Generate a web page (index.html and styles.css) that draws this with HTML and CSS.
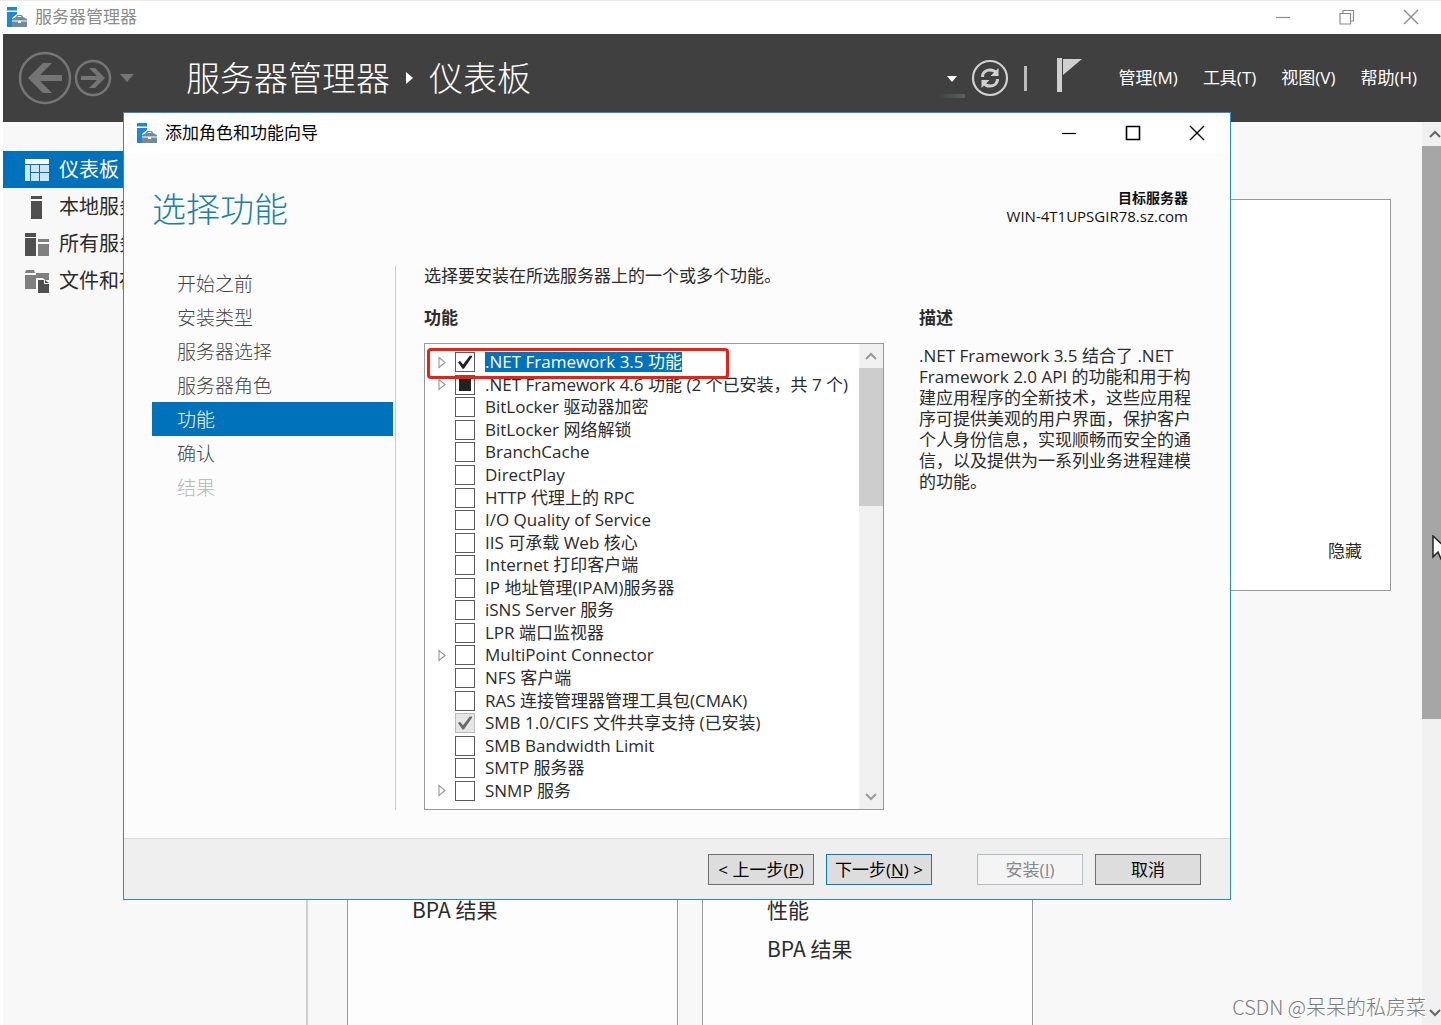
FILE: index.html
```html
<!DOCTYPE html>
<html lang="zh-CN">
<head>
<meta charset="utf-8">
<title>服务器管理器</title>
<link rel="stylesheet" href="styles.css">
</head>
<body>
<svg class="defs" aria-hidden="true">
  <symbol id="server" viewBox="0 0 20 20">
    <path fill="#1c88d8" d="M0 0h10v3.500H0zM0 5h10v2l-5 4v9H0z"/>
    <path fill="#6e8ba3" d="M5 12l4-2c.3-1.500 1-2 2-2h3c1 0 1.700.5 2 2l4 2v1.500H5zM10.500 10h4l-.5-1h-3zM5 14.500h6V16h3v-1.500h6V20H5z"/>
  </symbol>
  <symbol id="up" viewBox="0 0 12 8"><path d="M1 7l5-5 5 5" fill="none" stroke="currentColor" stroke-width="2"/></symbol>
  <symbol id="down" viewBox="0 0 12 8"><path d="M1 1l5 5 5-5" fill="none" stroke="currentColor" stroke-width="2"/></symbol>
  <symbol id="close" viewBox="0 0 16 16"><path d="M1 1l14 14M15 1L1 15" fill="none" stroke="currentColor" stroke-width="1.400"/></symbol>
  <symbol id="minimize" viewBox="0 0 16 16"><path d="M1 8.500h14" fill="none" stroke="currentColor" stroke-width="1.200"/></symbol>
  <symbol id="expand" viewBox="0 0 8 13"><path d="M1 1.500v10l6-5z" fill="#fff" stroke="#999" stroke-width="1.100"/></symbol>
</svg>
<div class="app">
  <header class="titlebar">
    <svg class="app-icon"><use href="#server"/></svg>
    <span class="titlebar-text">服务器管理器</span>
    <div class="window-buttons">
      <button type="button" aria-label="最小化"><svg><use href="#minimize"/></svg></button>
      <button type="button" aria-label="还原"><svg viewBox="0 0 16 16"><path d="M1 4.500h10.500V15H1zM4 4.500V1.500h10.500V12h-3" fill="none" stroke="currentColor" stroke-width="1.200"/></svg></button>
      <button type="button" aria-label="关闭"><svg><use href="#close"/></svg></button>
    </div>
  </header>

  <div class="banner">
    <div class="history">
      <button type="button" aria-label="后退"><svg width="54" height="54" viewBox="0 0 54 54"><circle cx="27" cy="27" r="25" fill="none" stroke="#757575" stroke-width="2.500"/><path d="M10 27L25 12h9L22 24h22v6H22l12 12h-9z" fill="#757575"/></svg></button>
      <button type="button" aria-label="前进"><svg width="38" height="38" viewBox="0 0 38 38"><circle cx="19" cy="19" r="17" fill="none" stroke="#757575" stroke-width="2.500"/><path d="M31 19L21 9h-6l8 8H7v4h16l-8 8h6z" fill="#757575"/></svg></button>
      <button type="button" class="history-more" aria-label="历史"><svg width="14" height="8" viewBox="0 0 14 8"><path d="M0 0h14L7 8z" fill="#757575"/></svg></button>
    </div>
    <h1 class="crumbs">服务器管理器<svg width="7" height="12" viewBox="0 0 7 12"><path d="M0 0v12l7-6z" fill="#fff"/></svg>仪表板</h1>
    <div class="tools">
      <button type="button" class="tool-drop" aria-label="通知范围"><svg width="10" height="6" viewBox="0 0 10 6"><path d="M0 0h10L5 6z" fill="#fff"/></svg></button>
      <button type="button" aria-label="刷新"><svg width="38" height="38" viewBox="0 0 38 38" fill="none" stroke="#d0d0d0"><circle cx="19" cy="19" r="17" stroke-width="2.200"/><path d="M11.500 18c0-5 4-7 7.500-7 3 0 5 1 6.500 3M26.500 20c0 5-4 7-7.500 7-3 0-5-1-6.500-3" stroke-width="3"/><path d="M27.500 9v8h-8l3-3zM10.500 29v-8h8l-3 3z" fill="#d0d0d0" stroke="none"/></svg></button>
      <span class="tool-line"></span>
      <button type="button" class="flag" aria-label="通知"><svg width="26" height="34" viewBox="0 0 26 34"><path d="M0 0h5v34H0zM6 1h19L6 17z" fill="#cfcfcf"/></svg></button>
    </div>
    <nav class="menu">
      <a href="#manage">管理(M)</a>
      <a href="#tools">工具(T)</a>
      <a href="#view">视图(V)</a>
      <a href="#help">帮助(H)</a>
    </nav>
  </div>

  <div class="workspace">
    <nav class="sidebar">
      <a class="active" href="#dashboard"><svg width="24" height="22" viewBox="0 0 24 22"><path fill="#fff" d="M0 0h24v5H0z"/><path fill="#cfe4f5" d="M0 6h5v16H0zM6 6h8v7H6zM15 6h9v7h-9zM6 14h8v8H6zM15 14h9v8h-9z"/></svg>仪表板</a>
      <a href="#local"><svg width="24" height="24" viewBox="0 0 24 24"><path fill="#505050" d="M6 1h11v3H6zM6 6h11v18H6z"/></svg>本地服务器</a>
      <a href="#all"><svg width="24" height="24" viewBox="0 0 24 24"><path fill="#505050" d="M0 1h11v4H0zM0 6h11v18H0z"/><path fill="#808080" d="M13 7h11v3H13zM13 12h11v12H13z"/></svg>所有服务器</a>
      <a href="#files"><svg width="24" height="24" viewBox="0 0 24 24"><path fill="#808080" d="M1 1h8l1 3H0zM0 6h11v14H0zM11 4h13v7h-4l-2-2h-7z"/><path fill="#505050" d="M13 11h6v4h5v9H13zM20 11l4 3h-4z"/></svg>文件和存储</a>
    </nav>
    <main class="dashboard">
      <section class="welcome"><button type="button">隐藏</button></section>
      <div class="tiles">
        <section class="tile"><a href="#bpa-1">BPA 结果</a></section>
        <section class="tile"><a href="#perf">性能</a><a href="#bpa-2">BPA 结果</a></section>
      </div>
    </main>
    <div class="page-scroll">
      <svg class="arrow"><use href="#up"/></svg>
      <div class="page-track"><div class="page-thumb"></div></div>
      <svg class="arrow"><use href="#down"/></svg>
    </div>
  </div>

  <div class="dialog" role="dialog" aria-labelledby="dialog-title">
    <header class="dialog-bar">
      <svg class="app-icon"><use href="#server"/></svg>
      <span id="dialog-title">添加角色和功能向导</span>
      <div class="window-buttons">
        <button type="button" aria-label="最小化"><svg><use href="#minimize"/></svg></button>
        <button type="button" aria-label="最大化"><svg viewBox="0 0 16 16"><path d="M1.500 1.500h13v13h-13z" fill="none" stroke="currentColor" stroke-width="1.600"/></svg></button>
        <button type="button" aria-label="关闭"><svg><use href="#close"/></svg></button>
      </div>
    </header>
    <div class="dialog-head">
      <h2>选择功能</h2>
      <div class="target">
        <strong>目标服务器</strong>
        <p>WIN-4T1UPSGIR78.sz.com</p>
      </div>
    </div>
    <div class="dialog-body">
      <nav class="steps">
        <a href="#s1">开始之前</a>
        <a href="#s2">安装类型</a>
        <a href="#s3">服务器选择</a>
        <a href="#s4">服务器角色</a>
        <a href="#s5" class="current">功能</a>
        <a href="#s6">确认</a>
        <a class="disabled">结果</a>
      </nav>
      <div class="choose">
        <p class="lead">选择要安装在所选服务器上的一个或多个功能。</p>
        <div class="columns">
          <section class="features">
            <h3>功能</h3>
            <div class="listbox">
              <ul>
                <li class="parent selected"><svg class="expander"><use href="#expand"/></svg><label><input type="checkbox" checked><span>.NET Framework 3.5 功能</span></label></li>
                <li class="parent"><svg class="expander"><use href="#expand"/></svg><label><input type="checkbox" class="partial"><span>.NET Framework 4.6 功能 (2 个已安装，共 7 个)</span></label></li>
                <li><label><input type="checkbox"><span>BitLocker 驱动器加密</span></label></li>
                <li><label><input type="checkbox"><span>BitLocker 网络解锁</span></label></li>
                <li><label><input type="checkbox"><span>BranchCache</span></label></li>
                <li><label><input type="checkbox"><span>DirectPlay</span></label></li>
                <li><label><input type="checkbox"><span>HTTP 代理上的 RPC</span></label></li>
                <li><label><input type="checkbox"><span>I/O Quality of Service</span></label></li>
                <li><label><input type="checkbox"><span>IIS 可承载 Web 核心</span></label></li>
                <li><label><input type="checkbox"><span>Internet 打印客户端</span></label></li>
                <li><label><input type="checkbox"><span>IP 地址管理(IPAM)服务器</span></label></li>
                <li><label><input type="checkbox"><span>iSNS Server 服务</span></label></li>
                <li><label><input type="checkbox"><span>LPR 端口监视器</span></label></li>
                <li class="parent"><svg class="expander"><use href="#expand"/></svg><label><input type="checkbox"><span>MultiPoint Connector</span></label></li>
                <li><label><input type="checkbox"><span>NFS 客户端</span></label></li>
                <li><label><input type="checkbox"><span>RAS 连接管理器管理工具包(CMAK)</span></label></li>
                <li><label><input type="checkbox" checked disabled><span>SMB 1.0/CIFS 文件共享支持 (已安装)</span></label></li>
                <li><label><input type="checkbox"><span>SMB Bandwidth Limit</span></label></li>
                <li><label><input type="checkbox"><span>SMTP 服务器</span></label></li>
                <li class="parent"><svg class="expander"><use href="#expand"/></svg><label><input type="checkbox"><span>SNMP 服务</span></label></li>
              </ul>
              <div class="list-scroll">
                <svg class="arrow"><use href="#up"/></svg>
                <div class="list-track"><div class="list-thumb"></div></div>
                <svg class="arrow"><use href="#down"/></svg>
              </div>
              <div class="highlight"></div>
            </div>
          </section>
          <section class="description">
            <h3>描述</h3>
            <p>.NET Framework 3.5 结合了 .NET Framework 2.0 API 的功能和用于构建应用程序的全新技术，这些应用程序可提供美观的用户界面，保护客户个人身份信息，实现顺畅而安全的通信，以及提供为一系列业务进程建模的功能。</p>
          </section>
        </div>
      </div>
    </div>
    <footer class="dialog-foot">
      <button type="button">&lt; 上一步(<u>P</u>)</button>
      <button type="button" class="primary">下一步(<u>N</u>) &gt;</button>
      <button type="button" class="install" disabled>安装(<u>I</u>)</button>
      <button type="button">取消</button>
    </footer>
  </div>

  <svg class="cursor" width="18" height="26" viewBox="0 0 18 26"><path d="M1 1v21l5-5 3 7 4-2-3-6h7z" fill="#fff" stroke="#222" stroke-width="1.500"/></svg>
  <div class="watermark">CSDN @呆呆的私房菜</div>
</div>
</body>
</html>
```
FILE: styles.css
```css
* { box-sizing: border-box; }

body {
  margin: 0;
  background: #fff;
  color: #2b2b2b;
  font: 17px/22px "Open Sans", "Noto Sans CJK SC", sans-serif;
}

h1, h2, h3, p, ul { margin: 0; padding: 0; font-weight: 400; }
ul { list-style: none; }
a { color: inherit; text-decoration: none; }
svg { flex: none; display: block; }

button {
  margin: 0;
  padding: 0;
  border: 0;
  background: none;
  color: inherit;
  font: inherit;
}

.defs { position: absolute; width: 0; height: 0; }

.app {
  position: relative;
  display: flex;
  flex-direction: column;
  height: 100vh;
  min-height: 920px;
  overflow: hidden;
  border-top: 1px solid #ececec;
}

.app-icon { width: 20px; height: 20px; }

/* Main window title bar */
.titlebar {
  display: flex;
  align-items: center;
  gap: 8px;
  height: 33px;
  padding: 0 22px 2px 7px;
  color: #8c8c8c;
}

.window-buttons {
  display: flex;
  gap: 48px;
  margin-left: auto;
}

.window-buttons svg { width: 16px; height: 16px; }

/* Dark banner */
.banner {
  display: flex;
  align-items: center;
  height: 88px;
  margin-left: 3px;
  padding: 0 24px 0 15px;
  background: #404040;
  color: #fff;
}

.history { display: flex; align-items: center; gap: 2px; width: 168px; }
.history-more { margin-left: 6px; }

.crumbs {
  display: flex;
  align-items: center;
  gap: 16px;
  font-size: 34px;
  font-weight: 300;
  line-height: 48px;
}

.tools { display: flex; align-items: center; margin-left: auto; }

.tool-drop {
  padding: 18px 8px 16px;
  margin-right: 6px;
  background: linear-gradient(90deg, #404040, #5a6164) bottom / 100% 4px no-repeat;
}

.tool-line { width: 3px; height: 25px; margin: 0 30px 0 15px; background: #bdbdbd; }
.flag { margin-bottom: 6px; }

.menu { display: flex; gap: 25px; margin-left: 36px; }

/* Workspace under the banner */
.workspace {
  flex: 1;
  display: flex;
  min-height: 0;
  margin-left: 3px;
  background: #f8f8f8;
}

.sidebar {
  flex: none;
  width: 305px;
  padding-top: 29px;
  border-right: 2px solid #cfcfcf;
}

.sidebar a {
  display: flex;
  align-items: center;
  gap: 10px;
  height: 37px;
  padding-left: 22px;
  font-size: 20px;
}

.sidebar .active { background: #0072bc; color: #fff; }

.dashboard {
  flex: 1;
  display: flex;
  flex-direction: column;
  gap: 48px;
  min-width: 0;
  padding: 77px 31px 0 39px;
}

.welcome {
  flex: none;
  display: flex;
  justify-content: flex-end;
  align-items: flex-end;
  height: 392px;
  padding: 28px;
  border: 1px solid #999;
  background: #fff;
}

.tiles { flex: 1; display: flex; gap: 24px; }

.tile {
  display: flex;
  flex-direction: column;
  gap: 17px;
  width: 331px;
  padding: 258px 64px 0;
  border: 1px solid #999;
  border-bottom: 0;
  background: #fdfdfd;
  font: 21px/22px "Noto Sans CJK SC", sans-serif;
}

.page-scroll {
  display: flex;
  flex-direction: column;
  align-items: center;
  width: 19px;
  overflow: hidden;
  background: #f0f0f0;
  color: #666;
}

.arrow { width: 12px; height: 8px; margin: 8px 0; }
.page-scroll .arrow { margin-left: 6px; }
.page-track { flex: 1; align-self: stretch; }
.page-thumb { height: 67%; background: #a6a6a6; }

/* Wizard window */
.dialog {
  position: absolute;
  top: 111px;
  left: 123px;
  right: 210px;
  border: 1px solid #2a8ad8;
  background: #fcfcfc;
}

.dialog-bar {
  display: flex;
  align-items: center;
  gap: 8px;
  height: 41px;
  padding: 0 25px 2px 13px;
  background: #fff;
  color: #000;
}

.dialog-head {
  display: flex;
  justify-content: space-between;
  padding: 31px 42px 0 28px;
}

.dialog-head h2 {
  color: #1b80a4;
  font-size: 34px;
  font-weight: 300;
  line-height: 48px;
}

.target {
  padding-top: 4px;
  color: #111;
  font-size: 15px;
  line-height: 18px;
  text-align: right;
}

.target strong { display: block; font-size: 14px; }

.dialog-body { display: flex; padding: 33px 32px 28px 28px; }

.steps {
  display: flex;
  flex-direction: column;
  flex: none;
  width: 244px;
  padding-right: 2px;
  border-right: 1px solid #ccc;
  color: #444;
}

.steps a {
  height: 34px;
  padding-left: 25px;
  font-size: 19px;
  font-weight: 300;
  line-height: 36px;
}

.steps .current { background: #0072bc; color: #fff; }
.steps .disabled { color: #b4b4b4; }

.choose { flex: 1; padding-left: 28px; }
.lead { line-height: 20px; }
.columns { display: flex; gap: 35px; margin-top: 22px; }
.columns h3 { font-size: 17px; font-weight: 700; line-height: 20px; }

.features { flex: none; width: 460px; }

.listbox {
  position: relative;
  display: flex;
  height: 467px;
  margin-top: 15px;
  border: 1px solid #999;
  background: #fff;
}

.listbox ul {
  flex: 1;
  display: grid;
  grid-auto-rows: 1fr;
  padding: 7px 0;
}

.listbox li { display: flex; align-items: center; min-height: 0; padding-left: 30px; }
.listbox .parent { padding-left: 13px; }
.listbox label { display: flex; align-items: center; gap: 10px; white-space: nowrap; }
.expander { width: 8px; height: 13px; margin-right: 9px; }

input[type="checkbox"] {
  appearance: none;
  display: grid;
  place-items: center;
  width: 20px;
  height: 20px;
  margin: 0;
  border: 1px solid #5c5c5c;
  background: #fff;
}

input:checked::after {
  content: "";
  width: 14px;
  height: 14px;
  background: #222;
  clip-path: polygon(0 50%, 14% 40%, 36% 66%, 84% 3%, 100% 3%, 100% 12%, 42% 96%, 32% 96%);
}

input:disabled { border-color: #bbb; background: #e6e6e6; }
input:checked:disabled::after { background: #6a6a6a; }
input.partial::after { content: ""; width: 12px; height: 12px; background: #222; }

.selected span { background: #0072bc; color: #fff; line-height: 20px; }

.list-scroll {
  display: flex;
  flex-direction: column;
  align-items: center;
  width: 24px;
  background: #f0f0f0;
  color: #999;
}

.list-track { flex: 1; align-self: stretch; }
.list-thumb { height: 33%; background: #cdcdcd; }

.highlight {
  position: absolute;
  top: 4px;
  left: 2px;
  width: 302px;
  height: 31px;
  border: 3px solid #fa1a10;
  border-radius: 4px;
}

.description { flex: 1; }
.description p { margin-top: 17px; line-height: 21px; }

.dialog-foot {
  display: flex;
  gap: 12px;
  justify-content: flex-end;
  padding: 15px 29px 14px;
  border-top: 1px solid #d8d8d8;
  background: #efefef;
  color: #000;
}

.dialog-foot button {
  width: 106px;
  height: 31px;
  border: 1px solid #6e6e6e;
  background: #ddd;
}

.dialog-foot .primary { border-color: #0078d7; }
.dialog-foot .install { margin-left: 33px; border-color: #b4bcc0; background: #f4f4f4; color: #888; }

.cursor { position: absolute; top: 534px; right: -9px; }

.watermark {
  position: absolute;
  right: 15px;
  bottom: 4px;
  color: #7c7c7c;
  font: 300 20px/28px "Noto Sans CJK SC", sans-serif;
  text-shadow: 1px 1px 0 #fff;
}
```
